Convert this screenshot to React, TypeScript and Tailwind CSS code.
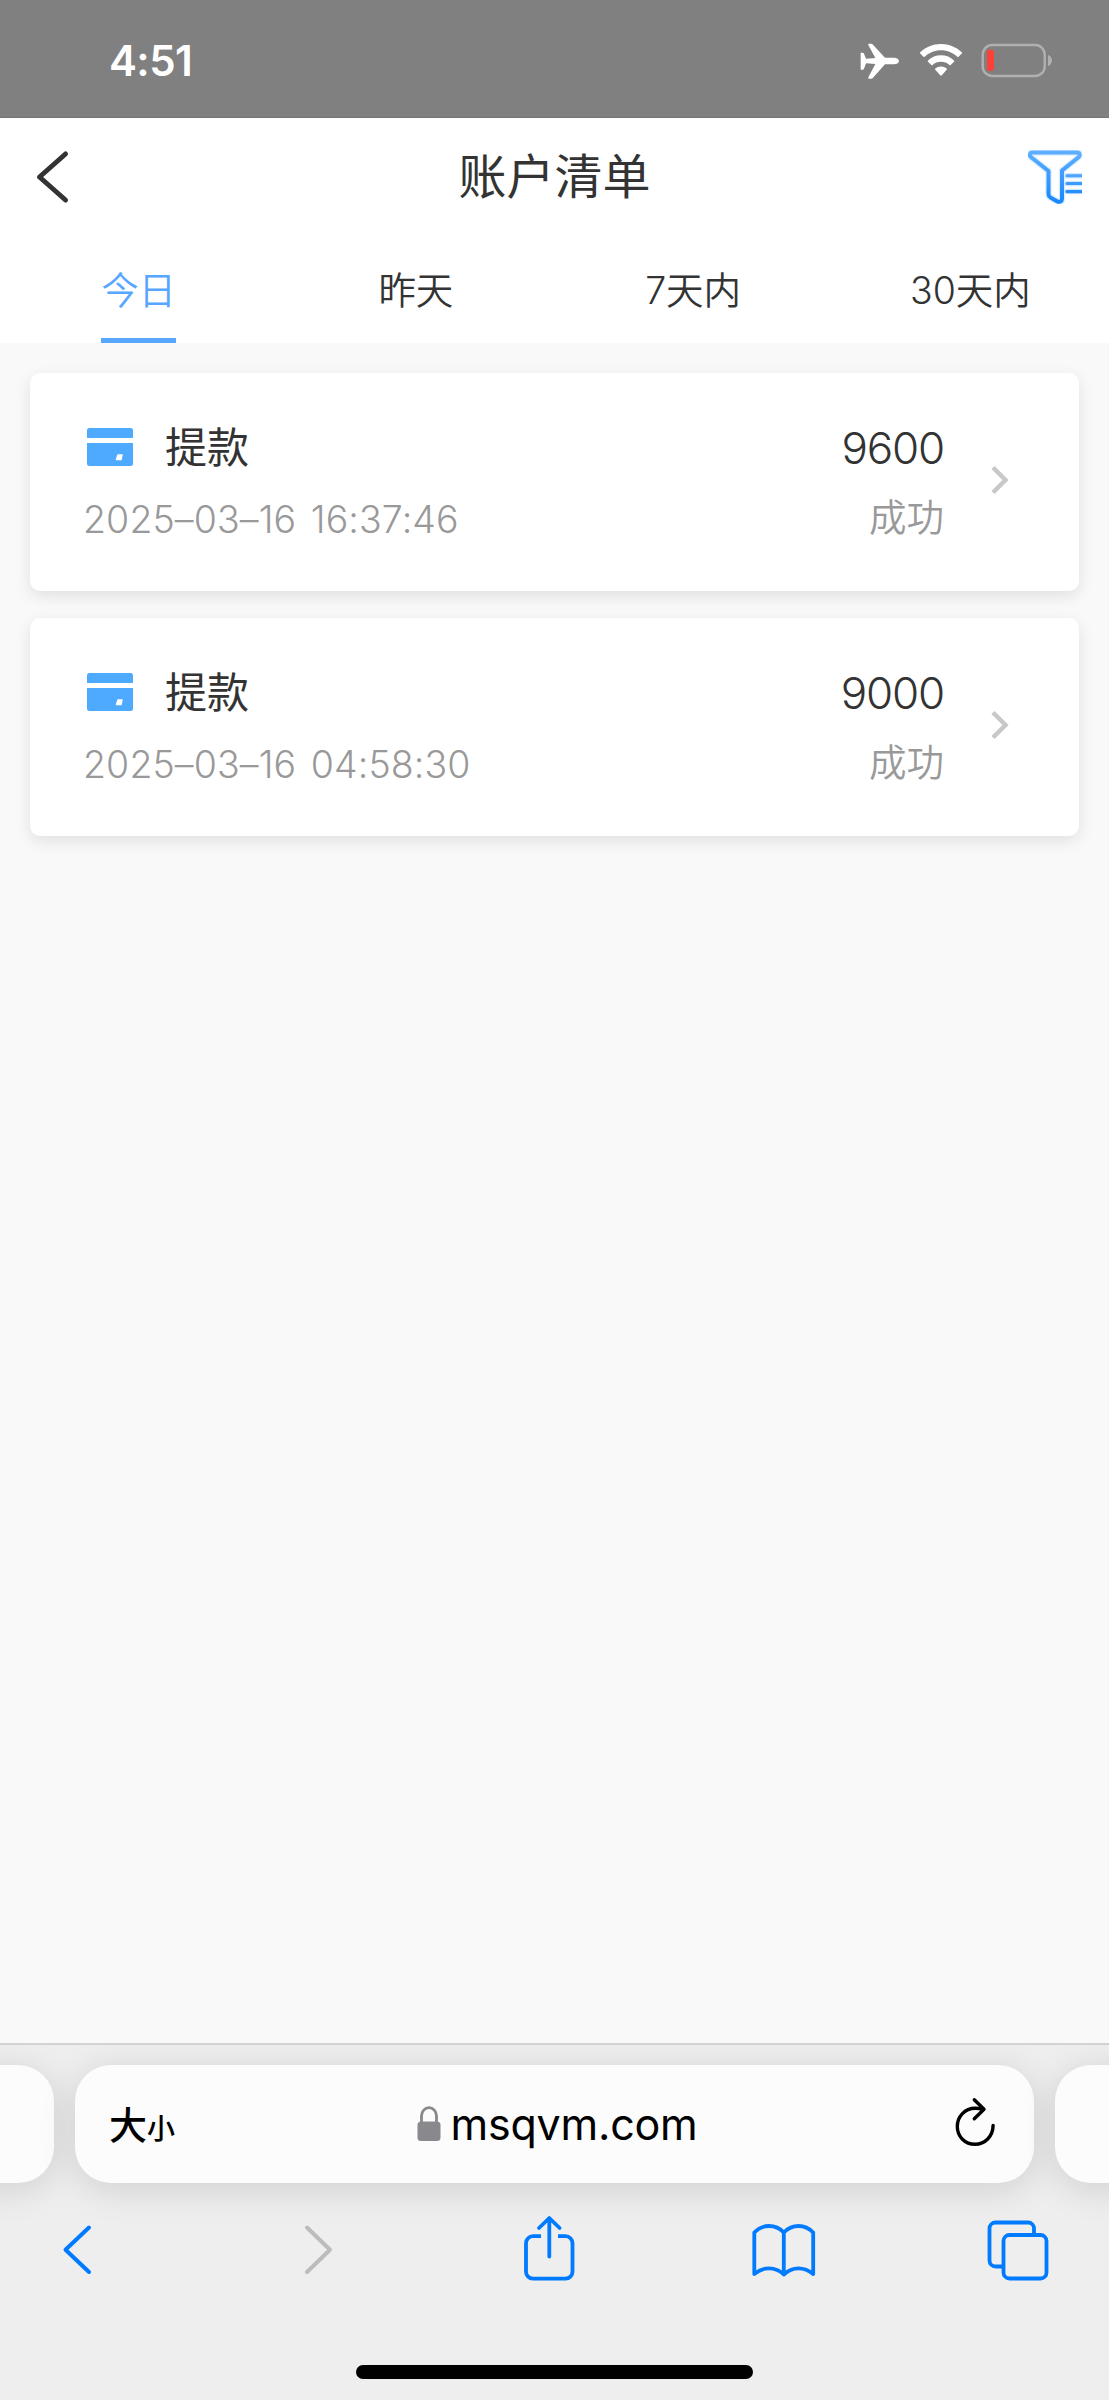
import React from 'react';

interface AccountRecord {
  id: number;
  title: string;
  time: string;
  amount: string;
  status: string;
}

const tabs = ['今日', '昨天', '7天内', '30天内'];

const records: AccountRecord[] = [
  { id: 1, title: '提款', time: '2025–03–16 16:37:46', amount: '9600', status: '成功' },
  { id: 2, title: '提款', time: '2025–03–16 04:58:30', amount: '9000', status: '成功' },
];

function StatusBar() {
  return (
    <div className="h-[118px] shrink-0 bg-[#808080] border-b border-[#757575] flex items-start justify-between pl-[109px] pr-[56px] text-white">
      <span className="mt-[36px] text-[42px] leading-[50px] font-semibold tracking-[-0.6px]">4:51</span>
      <div className="flex items-start mt-[43px]">
        {/* Airplane mode */}
        <svg className="w-[40px] h-[36px]" viewBox="0 0 120 108" fill="currentColor">
          <path d="M2 29h6c2 0 3 1 4 3l6 15 28-2L25 6c-1-3 0-4 2-4h6c3 0 4 1 6 3l36 39h27c8 0 15 4 15 10s-7 10-15 10H75l-36 40c-2 2-3 3-6 3h-6c-2 0-3-1-2-4l21-40-28-2-6 16c-1 2-2 3-4 3H2z" />
        </svg>
        {/* Wi-Fi */}
        <svg className="w-[44px] h-[34px] ml-[19px]" viewBox="0 0 44 34" fill="currentColor">
          <path d="M22 1C14 1 6.600 4.100 1.200 9.300c-.4.400-.4.900 0 1.300l3.200 3.200c.4.400.9.400 1.300 0C10 9.700 15.700 7.300 22 7.300s12 2.400 16.300 6.500c.4.400.9.400 1.300 0l3.200-3.200c.4-.4.4-.9 0-1.300C37.400 4.100 30 1 22 1z" />
          <path d="M22 12.300c-5 0-9.500 1.900-13 5.100-.4.400-.4.900 0 1.300l3.300 3.200c.4.400.8.400 1.300 0 2.200-2 5.200-3.200 8.400-3.200s6.200 1.200 8.400 3.200c.5.400.9.400 1.300 0l3.300-3.200c.4-.4.4-.9 0-1.300-3.500-3.200-8-5.100-13-5.100z" />
          <path d="M22 23.400c-2.100 0-4.200.8-5.700 2.200-.4.400-.4.900 0 1.200l4.900 5.500c.5.500 1.100.5 1.600 0l4.900-5.500c.4-.3.400-.8 0-1.200-1.500-1.400-3.600-2.200-5.700-2.200z" />
        </svg>
        {/* Battery */}
        <svg className="w-[72px] h-[35px] ml-[18px]" viewBox="0 0 72 35" fill="none">
          <rect x="1.700" y="2" width="62" height="31" rx="9.500" stroke="#b0b0b0" strokeWidth="2.400" />
          <rect x="6" y="6.500" width="7" height="21.500" rx="3" fill="#ff4036" />
          <path d="M67 12c2.300.7 4 3 4 5.600s-1.700 4.900-4 5.600z" fill="#b0b0b0" />
        </svg>
      </div>
    </div>
  );
}

function NavBar() {
  return (
    <div className="h-[117px] flex items-center justify-between px-[27px] text-[#333]">
      <svg className="w-[54px] h-[54px] mt-[1px]" viewBox="-9 0 54 54" fill="none" stroke="currentColor" strokeWidth="5" strokeLinecap="round" strokeLinejoin="round">
        <path d="M29.500 4L3.500 27l26 23" />
      </svg>
      <h1 className="text-[48px] leading-[56px]">账户清单</h1>
      <svg className="w-[54px] h-[54px]" viewBox="0 0 54 54" fill="none" strokeWidth="4" strokeLinejoin="round" strokeLinecap="round">
        <defs>
          <linearGradient id="funnel" gradientUnits="userSpaceOnUse" x1="0" y1="0" x2="0" y2="54">
            <stop offset="0" stopColor="#5fb0ff" />
            <stop offset="1" stopColor="#1786fb" />
          </linearGradient>
        </defs>
        <path d="M4.500 2.500h44.500c2.800 0 3.600 2.900 1.500 4.700L34 20.500v28.500c0 2.400-2.600 3.400-4.600 2.400l-7-4c-1.200-.8-1.900-1.900-1.900-3.400V21L3.200 7.200C1 5.400 1.700 2.500 4.500 2.500z" stroke="#b9dcff" strokeWidth="6.500" opacity=".5" />
        <path d="M4.500 2.500h44.500c2.800 0 3.600 2.900 1.500 4.700L34 20.500v28.500c0 2.400-2.600 3.400-4.600 2.400l-7-4c-1.200-.8-1.900-1.900-1.900-3.400V21L3.200 7.200C1 5.400 1.700 2.500 4.500 2.500z" stroke="url(#funnel)" />
        <path d="M39 25.700h15M39 33.600h15M39 41.600h15" stroke="#cfe6ff" strokeWidth="5.500" />
        <path d="M39 25.700h15" stroke="#4ba5ff" strokeWidth="3" />
        <path d="M39 33.600h15" stroke="#3b9bff" strokeWidth="3" />
        <path d="M39 41.600h15" stroke="#278ffd" strokeWidth="3.400" />
      </svg>
    </div>
  );
}

function Tabs() {
  const [active, setActive] = React.useState(0);

  return (
    <div className="grid grid-cols-4 h-[108px]">
      {tabs.map((tab, index) => (
        <button key={tab} onClick={() => setActive(index)} className="flex justify-center">
          <span
            className={`h-full pt-[34px] text-[37.5px] leading-[44px] font-[350] border-b-[5px] ${
              index === active ? 'text-[#57a6ff] border-[#57a6ff]' : 'text-[#333] border-transparent'
            }`}
          >
            {tab}
          </span>
        </button>
      ))}
    </div>
  );
}

function RecordCard({ record }: { record: AccountRecord }) {
  return (
    <div className="h-[218px] bg-white rounded-[10px] shadow-[0_5px_16px_rgba(0,0,0,0.1)] flex items-start pl-[54px] pr-[69px] pt-[48px]">
      <div className="flex-1">
        <div className="flex items-center h-[50px]">
          <svg className="w-[46px] h-[38px] ml-[3px] mt-[1px]" viewBox="0 0 46 38" fill="#4eaaff">
            <path d="M2.500 0h41A2.500 2.500 0 0 1 46 2.500V10H0V2.500A2.500 2.500 0 0 1 2.500 0zM0 15h46v20.500a2.500 2.500 0 0 1-2.500 2.500h-41A2.500 2.500 0 0 1 0 35.500z" />
            <path d="M31 27h4l-1 4.500h-4.500z" fill="#fff" stroke="#fff" strokeWidth="1.500" strokeLinejoin="round" />
          </svg>
          <span className="ml-[32px] mt-[4px] text-[42px] leading-[50px] text-[#333]">{record.title}</span>
        </div>
        <div className="mt-[27px] -ml-[1px] text-[37.5px] leading-[44px] font-[350] tracking-[0.1px] [word-spacing:4px] text-[#999]">{record.time}</div>
      </div>
      <div className="text-right">
        <div className="h-[50px] text-[44px] leading-[54px] font-[350] tracking-[-1.2px] text-[#333]">{record.amount}</div>
        <div className="mt-[25px] text-[37.5px] leading-[44px] font-[350] text-[#999]">{record.status}</div>
      </div>
      <svg className="w-[20px] h-[30px] ml-[46px] mt-[44px]" viewBox="0 0 20 30" fill="none" stroke="#c8c8c8" strokeWidth="4.500">
        <path d="M3 2.500L15.500 15 3 27.500" />
      </svg>
    </div>
  );
}

function AddressBar() {
  return (
    <div className="flex h-[118px] shrink-0 gap-[21px] -mx-[46px] mt-[20px]">
      <div className="w-[100px] shrink-0 rounded-[36px] bg-[#fcfcfc] shadow-[0_6px_36px_rgba(0,0,0,0.13)]" />
      <div className="flex-1 rounded-[36px] bg-[#fcfcfc] shadow-[0_6px_36px_rgba(0,0,0,0.13)] flex items-center justify-between pl-[34px] pr-[38px] text-black">
        <div className="flex items-baseline font-medium leading-[50px] w-[100px] mt-[5px]">
          <span className="text-[38px]">大</span>
          <span className="text-[28px]">小</span>
        </div>
        <div className="flex items-center ml-[10px]">
          <svg className="w-[24px] h-[36px] mr-[9px]" viewBox="0 0 24 36" fill="none">
            <path d="M4.500 17V10a7.500 8.300 0 0 1 15 0v7" stroke="#88888d" strokeWidth="2.800" />
            <rect x=".5" y="15.500" width="23" height="19.500" rx="3.500" fill="#88888d" />
          </svg>
          <span className="text-[43px] leading-[50px] tracking-[-0.2px]">msqvm.com</span>
        </div>
        <div className="w-[100px] flex justify-end">
          <svg className="w-[42px] h-[50px] -mt-[4px]" viewBox="0 0 42 50" fill="none" stroke="currentColor" strokeWidth="3.400" strokeLinecap="round" strokeLinejoin="round">
            <path d="M29 12.500C26.500 11.600 24 11.200 21 11.200c-10 0-17.700 8.200-17.700 18.300S11 47.300 21 47.300s17.900-7.800 18.100-18.800" />
            <path d="M20.300 2.700l9.700 9.600-9.700 9.500" />
          </svg>
        </div>
      </div>
      <div className="w-[100px] shrink-0 rounded-[36px] bg-[#fcfcfc] shadow-[0_6px_36px_rgba(0,0,0,0.13)]" />
    </div>
  );
}

function Toolbar() {
  return (
    <div className="flex mt-[30px] pl-[46px] text-[#007aff]">
      <svg className="w-[64px] h-[70px]" viewBox="0 0 64 70" fill="none" stroke="currentColor" strokeWidth="4" strokeLinecap="round" strokeLinejoin="round">
        <path d="M43 14.500L19.500 36.700l23.500 22.300" />
      </svg>
      <svg className="w-[64px] h-[70px] ml-[177px]" viewBox="0 0 64 70" fill="none" stroke="#bcbcbc" strokeWidth="4" strokeLinecap="round" strokeLinejoin="round">
        <path d="M20 14.500L43 36.700 20 59" />
      </svg>
      {/* Share */}
      <svg className="w-[64px] h-[70px] ml-[167px]" viewBox="0 0 64 70" fill="none" stroke="currentColor" strokeWidth="3.800" strokeLinecap="round" strokeLinejoin="round">
        <path d="M23 23.200h-8a7 7 0 0 0-7 7v28.500a7 7 0 0 0 7 7h32.500a7 7 0 0 0 7-7V30.200a7 7 0 0 0-7-7h-7.500" strokeLinecap="butt" />
        <path d="M31.300 43.500V5.500M21 15L31.300 5 41.600 15" />
      </svg>
      {/* Bookmarks */}
      <svg className="w-[64px] h-[70px] ml-[170px]" viewBox="0 0 64 70" fill="none" stroke="currentColor" strokeWidth="3.800" strokeLinecap="round" strokeLinejoin="round">
        <path d="M31.800 19.500C28 15.400 23 13 17 13S6.300 15.400 2.300 19.500V61c4-3.300 9-5.600 14.700-5.600S28 57.700 31.800 61.500c4-3.800 9-6.100 14.700-6.100s10.700 2.300 14.700 5.600V19.500C57.200 15.400 52.200 13 46.500 13s-10.700 2.400-14.700 6.500zM31.800 19.500v42" />
      </svg>
      {/* Open tabs */}
      <svg className="w-[64px] h-[70px] ml-[170px]" viewBox="0 0 64 70" fill="none" stroke="currentColor" strokeWidth="3.800" strokeLinejoin="round">
        <path d="M17 53.500H9.500a6 6 0 0 1-6-6V15.500a6 6 0 0 1 6-6H42a6 6 0 0 1 6 6V22" />
        <rect x="17.500" y="22" width="43" height="43.500" rx="6" />
      </svg>
    </div>
  );
}

export default function App() {
  return (
    <div className="w-[1109px] h-[2400px] flex flex-col overflow-hidden bg-[#f9f9f9] font-['Inter','Noto_Sans_CJK_SC',sans-serif]">
      <StatusBar />
      <header className="bg-white shrink-0">
        <NavBar />
        <Tabs />
      </header>
      <main className="flex-1 px-[30px] pt-[30px] flex flex-col gap-[27px]">
        {records.map((record) => (
          <RecordCard key={record.id} record={record} />
        ))}
      </main>
      <footer className="h-[357px] shrink-0 bg-[#eeeeee] border-t-2 border-[#d2d2d2] overflow-hidden flex flex-col">
        <AddressBar />
        <Toolbar />
        <div className="w-[397px] h-[14px] rounded-full bg-black mx-auto mt-auto mb-[21px]" />
      </footer>
    </div>
  );
}
